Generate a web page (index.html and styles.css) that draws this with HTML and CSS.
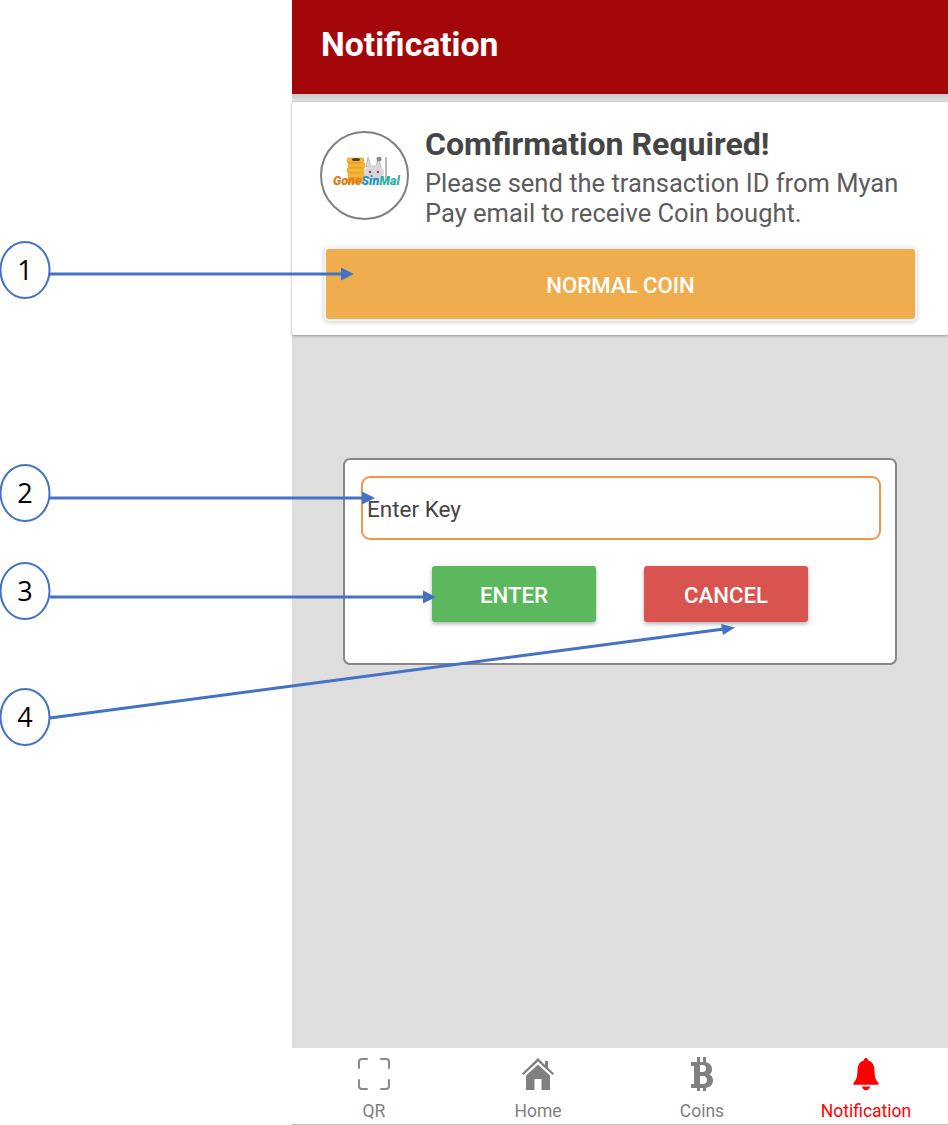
FILE: index.html
```html
<!DOCTYPE html>
<html lang="en">
<head>
    <meta charset="UTF-8">
    <title>Notification</title>
    <link rel="stylesheet" href="styles.css">
</head>
<body>
    <div class="page">
        <div class="gutter"></div>
        <div class="phone">
            <header class="app-bar">Notification</header>
            <main class="content">
                <section class="card">
                    <div class="card-head">
                        <div class="logo">
                            <svg width="66" height="50" viewBox="0 0 66 50">
                                <!-- coin stack -->
                                <g fill="#f2b632" stroke="#d9921c" stroke-width="0.6">
                                    <rect x="15" y="1" width="17" height="5" rx="2"/>
                                    <rect x="16" y="6" width="17" height="5" rx="2"/>
                                    <rect x="15" y="11" width="17" height="5" rx="2"/>
                                    <rect x="16" y="16" width="17" height="5" rx="2"/>
                                    <rect x="15" y="21" width="17" height="5" rx="2"/>
                                </g>
                                <ellipse cx="24" cy="2.500" rx="4" ry="1.500" fill="#4a3a20"/>
                                <!-- bunny -->
                                <path d="M36 0l3 10h-5zM46 0l-2 10h5z" fill="#dcdce0" stroke="#9a9a9e" stroke-width="0.6"/>
                                <ellipse cx="42" cy="16" rx="10" ry="8" fill="#d8d8dc"/>
                                <circle cx="38" cy="15" r="1.200" fill="#b5323a"/>
                                <circle cx="46" cy="15" r="1.200" fill="#b5323a"/>
                                <path d="M54 0v24" stroke="#b9b9bc" stroke-width="2"/>
                                <circle cx="47" cy="2" r="2.500" fill="#8b8b8f"/>
                            </svg>
                            <span class="logo-text"><span class="logo-a">Gone</span><span class="logo-b">Sin</span><span class="logo-c">Mal</span></span>
                        </div>
                        <div class="card-text">
                            <h1>Comfirmation Required!</h1>
                            <p>Please send the transaction ID from Myan Pay email to receive Coin bought.</p>
                        </div>
                    </div>
                    <button class="btn btn-coin" type="button">NORMAL COIN</button>
                </section>

                <section class="key-box">
                    <div class="key-input">Enter Key</div>
                    <div class="key-actions">
                        <button class="btn btn-enter" type="button">ENTER</button>
                        <button class="btn btn-cancel" type="button">CANCEL</button>
                    </div>
                </section>
            </main>
            <nav class="tabs">
                <div class="tab">
                    <svg width="34" height="34" viewBox="0 0 34 34" fill="none" stroke="#8a8a8a" stroke-width="2" stroke-linecap="round">
                        <path d="M2 11V5a3 3 0 0 1 3-3h5M24 2h5a3 3 0 0 1 3 3v6M32 23v6a3 3 0 0 1-3 3h-5M10 32H5a3 3 0 0 1-3-3v-6"/>
                    </svg>
                    <span>QR</span>
                </div>
                <div class="tab">
                    <svg width="34" height="34" viewBox="0 0 34 34" fill="#808080">
                        <path d="M17 1L1 16.500l1.500 1.500L17 4.500 31.500 18l1.500-1.500-6-5.700V4h-3v4zM5 18.500V33h8.500V22h7v11H29V18.500L17 7.500z"/>
                    </svg>
                    <span>Home</span>
                </div>
                <div class="tab">
                    <svg width="34" height="34" viewBox="0 0 34 34" fill="#808080">
                        <path fill-rule="evenodd" d="M12 0h3v5h3V0h3v5.300c4 .9 6 3.500 6 7.200 0 2.300-1 4-2.600 5 2.400 1 3.600 3.100 3.600 5.800 0 4.300-2.800 7-7 7.400V34h-3v-3h-3v3h-3v-3H6v-4h3V9H6V5h6zm3 8v7h3c1.900 0 3-1.400 3-3.500S19.900 8 18 8zm0 11v8h3.500c2.200 0 3.500-1.700 3.500-4s-1.300-4-3.500-4z"/>
                    </svg>
                    <span>Coins</span>
                </div>
                <div class="tab tab-active">
                    <svg width="34" height="34" viewBox="0 0 34 34" fill="#ff0000">
                        <path d="M17 1c1.300 0 2.100 1 2.100 2.400 4.200 1 6.400 4.700 6.400 9.600 0 6.500 1 10 4 13v1.800h-25V26c3-3 4-6.500 4-13 0-4.900 2.200-8.600 6.400-9.600C14.900 2 15.700 1 17 1zM13 29.500h8c-.4 2.300-2 3.800-4 3.800s-3.600-1.500-4-3.800z"/>
                    </svg>
                    <span>Notification</span>
                </div>
            </nav>
        </div>
    </div>

    <!-- callouts drawn on top of the screenshot -->
    <svg class="callouts" width="948" height="1125" viewBox="0 0 948 1125">
        <g fill="#fff" stroke="#4472c4" stroke-width="2">
            <ellipse cx="25" cy="270" rx="24.500" ry="28"/>
            <ellipse cx="25" cy="493" rx="24.500" ry="28"/>
            <ellipse cx="25" cy="591" rx="24.500" ry="28"/>
            <ellipse cx="25" cy="717" rx="24.500" ry="28"/>
        </g>
        <g stroke="#4472c4" stroke-width="3" fill="none">
            <path d="M50 274H343"/>
            <path d="M50 498H364"/>
            <path d="M50 597H425"/>
            <path d="M50 718L724 629"/>
        </g>
        <g fill="#4472c4">
            <path d="M354 274l-13-6.500v13z"/>
            <path d="M375 498l-13-6.500v13z"/>
            <path d="M436 597l-13-6.500v13z"/>
            <path d="M735 627.500l-14-3.500 2 11z"/>
        </g>
        <g class="callout-num" text-anchor="middle">
            <text x="25" y="280">1</text>
            <text x="25" y="503">2</text>
            <text x="25" y="601">3</text>
            <text x="25" y="727">4</text>
        </g>
    </svg>
</body>
</html>
```

FILE: styles.css
```css
* {
    box-sizing: border-box;
}
body {
    margin: 0;
    background-color: #fff;
    font-family: Roboto, "Liberation Sans", sans-serif;
    color: #444;
}
.page {
    display: flex;
    height: 1125px;
    overflow: hidden;
}
.gutter {
    width: 292px;
    flex: none;
}
.phone {
    width: 656px;
    display: flex;
    flex-direction: column;
}
.app-bar {
    height: 94px;
    flex: none;
    padding: 26px 0 0 29px;
    background-color: #a30709;
    color: #fff;
    font-size: 33.700px;
    font-weight: 700;
    line-height: 38px;
}
.content {
    flex: 1;
    padding-top: 8px;
    background: linear-gradient(#c9c9c9, #dedede 6px) #dedede;
}
.card {
    height: 233px;
    padding: 29px 33px 0 28px;
    background-color: #fff;
    border-radius: 2px;
    box-shadow: 0 1px 3px rgba(0, 0, 0, 0.35);
}
.card-head {
    display: flex;
    gap: 16px;
    height: 118px;
}
.logo {
    position: relative;
    width: 89px;
    height: 89px;
    flex: none;
    border: 2px solid #808080;
    border-radius: 50%;
    background-color: #fff;
}
.logo svg {
    position: absolute;
    left: 10px;
    top: 24px;
}
.logo-text {
    position: absolute;
    left: 11px;
    top: 41px;
    font-size: 12.500px;
    font-weight: 900;
    font-style: italic;
    line-height: 14px;
    white-space: nowrap;
}
.logo-a {
    color: #e37a14;
}
.logo-b {
    color: #1b8fc9;
}
.logo-c {
    color: #2bb39a;
}
.card-text {
    flex: 1;
}
.card-text h1 {
    margin: -1px 0 0;
    font-size: 32.100px;
    font-weight: 700;
    line-height: 28px;
    color: #454545;
}
.card-text p {
    margin: 10px 0 0;
    font-size: 25.500px;
    line-height: 30px;
    color: #5c5c5c;
}
.btn {
    display: block;
    border: none;
    border-radius: 3px;
    color: #fff;
    font-family: inherit;
    font-size: 22.200px;
    font-weight: 500;
    text-align: center;
}
.btn-coin {
    width: 589px;
    height: 70px;
    margin-left: 6px;
    padding-top: 2px;
    background-color: #f0ad4e;
    box-shadow: 0 0 0 2px #f4f4f4, 0 1px 4px 2px rgba(0, 0, 0, 0.22);
}
.key-box {
    width: 554px;
    height: 207px;
    margin: 123px 0 0 51px;
    padding: 16px;
    background-color: #fff;
    border: 2px solid #868686;
    border-radius: 7px;
}
.key-input {
    width: 520px;
    height: 64px;
    padding: 0 4px;
    border: 2px solid #f0964a;
    border-radius: 9px;
    font-size: 22.500px;
    line-height: 62px;
    color: #444;
}
.key-actions {
    display: flex;
    gap: 48px;
    margin: 26px 0 0 71px;
}
.btn-enter,
.btn-cancel {
    width: 164px;
    height: 56px;
    padding-top: 3px;
    box-shadow: 0 2px 4px rgba(0, 0, 0, 0.3);
}
.btn-enter {
    background-color: #5cb85c;
}
.btn-cancel {
    background-color: #d9534f;
}
.tabs {
    height: 77px;
    flex: none;
    display: flex;
    background-color: #fff;
    border-bottom: 1px solid #bdbdbd;
}
.tab {
    flex: 1;
    display: flex;
    flex-direction: column;
    align-items: center;
    padding-top: 9px;
    font-size: 17.500px;
    color: #808080;
}
.tab svg {
    display: block;
    height: 34px;
}
.tab span {
    margin-top: 10px;
    line-height: 20px;
}
.tab-active {
    color: #ff0000;
}
.callouts {
    position: absolute;
    left: 0;
    top: 0;
}
.callout-num {
    font-family: "Open Sans", "Liberation Sans", sans-serif;
    font-size: 27px;
    fill: #000;
}
```
